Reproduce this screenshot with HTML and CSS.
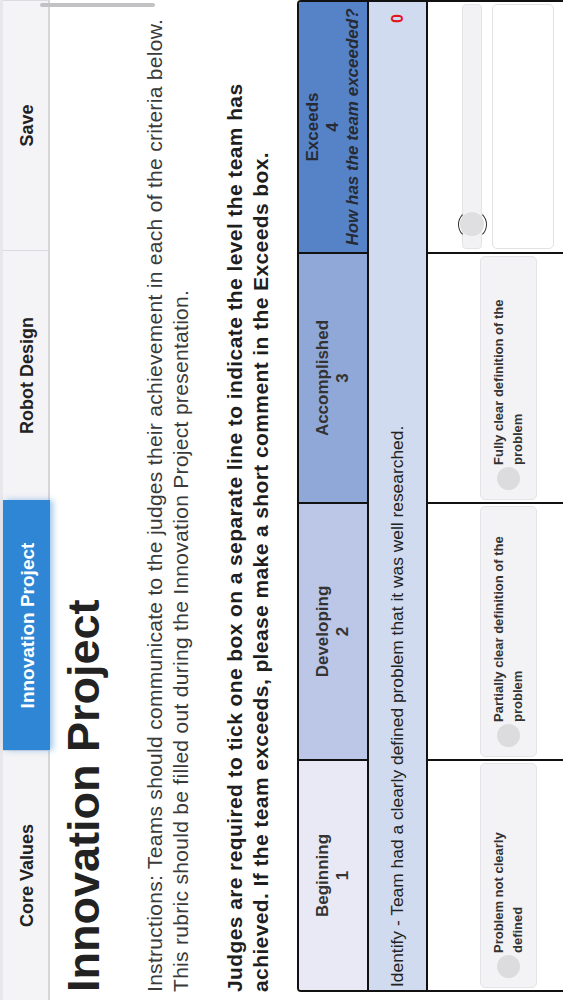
FILE: index.html
```html
<!DOCTYPE html>
<html lang="en">
<head>
<meta charset="utf-8">
<title>Innovation Project</title>
<link rel="stylesheet" href="styles.css">
</head>
<body>
<div class="stage">
  <nav class="tabs">
    <div class="tab">Core Values</div>
    <div class="tab active">Innovation Project</div>
    <div class="tab">Robot Design</div>
    <div class="tab">Save</div>
  </nav>
  <main class="content">
    <h1>Innovation Project</h1>
    <p class="instructions">Instructions: Teams should communicate to the judges their achievement in each of the criteria below.<br>This rubric should be filled out during the Innovation Project presentation.</p>
    <p class="judges">Judges are required to tick one box on a separate line to indicate the level the team has<br>achieved. If the team exceeds, please make a short comment in the Exceeds box.</p>
    <table class="rubric">
      <colgroup>
        <col class="c1"><col class="c2"><col class="c3"><col class="c4">
      </colgroup>
      <thead>
        <tr>
          <th class="lvl l1">Beginning<br>1</th>
          <th class="lvl l2">Developing<br>2</th>
          <th class="lvl l3">Accomplished<br>3</th>
          <th class="lvl l4">Exceeds<br>4<br><em>How has the team exceeded?</em></th>
        </tr>
      </thead>
      <tbody>
        <tr>
          <td class="desc" colspan="4">
            <div class="desc-row">
              <span>Identify - Team had a clearly defined problem that it was well researched.</span>
              <span class="score">0</span>
            </div>
          </td>
        </tr>
        <tr>
          <td class="cell">
            <label class="opt"><span class="radio"></span><span class="opt-text">Problem not clearly defined</span></label>
          </td>
          <td class="cell">
            <label class="opt"><span class="radio"></span><span class="opt-text">Partially clear definition of the problem</span></label>
          </td>
          <td class="cell">
            <label class="opt"><span class="radio"></span><span class="opt-text">Fully clear definition of the problem</span></label>
          </td>
          <td class="cell last">
            <div class="slider"><div class="thumb"><div class="thumb-fill"></div></div></div>
            <textarea class="comment"></textarea>
          </td>
        </tr>
      </tbody>
    </table>
  </main>
  <div class="scrollbar"></div>
</div>
</body>
</html>
```

FILE: styles.css
```css
* { box-sizing: border-box; }

html {
  margin: 0;
  padding: 0;
  overflow: hidden;
  background: #ffffff;
}

body {
  margin: 0;
  padding: 0;
  width: 563px;
  height: 1000px;
  font-family: "Liberation Sans", Arial, Helvetica, sans-serif;
  color: #222;
}

.stage {
  position: relative;
  width: 1000px;
  height: 563px;
  overflow: hidden;
  background: #ffffff;
  transform-origin: 0 0;
  transform: translateY(1000px) rotate(-90deg);
}

/* tab bar */
.tabs {
  display: flex;
  height: 50px;
  padding-top: 3px;
  background: #e8e7eb;
}

.tab {
  flex: 1;
  display: flex;
  align-items: center;
  justify-content: center;
  padding-top: 4px;
  background: #f4f3f6;
  border-right: 1px solid #dcdbe0;
  border-bottom: 2px solid #d6d5da;
  font-size: 18px;
  font-weight: bold;
  color: #222;
}

.tab.active {
  position: relative;
  z-index: 1;
  font-size: 19px;
  background: #2e86d4;
  border-color: #2e86d4;
  color: #ffffff;
  box-shadow: 0 3px 6px rgba(46, 134, 212, 0.45);
}

/* content */
.content {
  padding: 0 5px 0 8px;
}

h1 {
  margin: 9px 0 0;
  font-size: 45px;
  line-height: 49px;
  font-weight: bold;
  color: #222;
}

.instructions {
  margin: 34px 0 0;
  font-size: 21px;
  line-height: 26px;
  letter-spacing: 0.3px;
  color: #3a3a3a;
  white-space: nowrap;
}

.judges {
  margin: 28px 0 0;
  font-size: 21px;
  line-height: 26px;
  letter-spacing: 0.4px;
  font-weight: bold;
  color: #1e1e1e;
  white-space: nowrap;
}

/* rubric table */
.rubric {
  margin-top: 23px;
  width: 988px;
  table-layout: fixed;
  border-collapse: separate;
  border-spacing: 0;
  border: 2px solid #111;
  border-radius: 4px;
}

.c1 { width: 231px; }
.c2 { width: 257px; }
.c3 { width: 250px; }
.c4 { width: 250px; }

.lvl {
  height: 70px;
  padding: 2px 4px;
  border-bottom: 2px solid #111;
  border-right: 2px solid #111;
  font-size: 17px;
  line-height: 20px;
  font-weight: bold;
  text-align: center;
  vertical-align: middle;
  color: #333;
  white-space: nowrap;
}

.lvl em {
  font-style: italic;
}

.l1 { background: #e9e9f6; border-top-left-radius: 2px; }
.l2 { background: #bcc6e7; }
.l3 { background: #8fa8d7; }
.l4 { background: #5683c8; border-right: none; color: #262b36; border-top-right-radius: 2px; }

.desc {
  height: 59px;
  padding: 0 12px 0 3px;
  background: #d0dbef;
  border-bottom: 2px solid #111;
  vertical-align: middle;
}

.desc-row {
  display: flex;
  align-items: center;
  justify-content: space-between;
  font-size: 17.4px;
  color: #222;
}

.score {
  font-size: 16px;
  font-weight: bold;
  color: #e3141b;
}

.cell {
  height: 160px;
  padding: 0 2px;
  vertical-align: middle;
  border-right: 2px solid #111;
  background: #ffffff;
}

.cell.last {
  border-right: none;
  padding: 0 2px 0 3px;
}

.opt {
  display: flex;
  align-items: center;
  height: 57px;
  padding: 0 20px 0 9px;
  background: #f3f3f5;
  border: 1px solid #e4e4e8;
  border-radius: 5px;
}

.radio {
  flex: none;
  width: 23px;
  height: 23px;
  margin-right: 2px;
  border-radius: 50%;
  background: #dcdcdf;
}

.opt-text {
  font-size: 13px;
  line-height: 19px;
  font-weight: bold;
  color: #333;
}

.slider {
  position: relative;
  height: 20px;
  margin-bottom: 10px;
  background: #f2f2f4;
  border: 1px solid #e4e4e8;
  border-radius: 4px;
}

.thumb {
  position: absolute;
  left: 9px;
  top: -5.5px;
  width: 29px;
  height: 29px;
  padding: 1.5px;
  border: 1.5px solid;
  border-color: #333 transparent;
  border-radius: 50%;
}

.thumb-fill {
  width: 100%;
  height: 100%;
  border-radius: 50%;
  background: #dfdfe1;
}

.comment {
  display: block;
  width: 100%;
  height: 62px;
  margin: 0;
  resize: none;
  background: #ffffff;
  border: 1px solid #e2e2e5;
  border-radius: 5px;
}

.scrollbar {
  position: absolute;
  right: 3px;
  top: 40px;
  width: 4px;
  height: 115px;
  border-radius: 2px;
  background: #c2c2c4;
}
```
